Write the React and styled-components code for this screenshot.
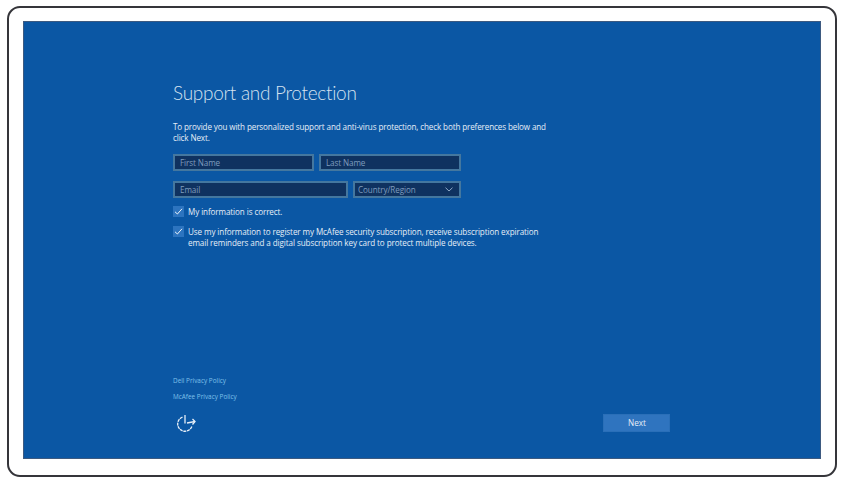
import React from "react";
import styled, { createGlobalStyle } from "styled-components";

const GlobalStyle = createGlobalStyle`
  html, body {
    margin: 0;
    padding: 0;
    background: #fff;
  }
  body {
    font-family: "Open Sans", "Noto Sans", "Liberation Sans", sans-serif;
  }
`;

const Page = styled.div`
  width: 843px;
  height: 481px;
  box-sizing: border-box;
  padding: 6px 6.5px 4.5px 7px;
`;

const Bezel = styled.div`
  width: 100%;
  height: 100%;
  box-sizing: border-box;
  border: 2px solid #35353a;
  border-radius: 13px;
  padding: 13px 14px 16px 14px;
`;

const Screen = styled.main`
  height: 100%;
  box-sizing: border-box;
  background: #0b57a4;
  border: 1px solid #3d5a80;
  padding: 59px 150px 26px 149px;
  display: flex;
  flex-direction: column;
  justify-content: space-between;
  color: #e6eef7;
`;

const Form = styled.section`
  display: flex;
  flex-direction: column;
`;

const Title = styled.h1`
  margin: 0 0 16px;
  font-family: "Lato", "Open Sans", sans-serif;
  font-size: 19px;
  letter-spacing: -0.3px;
  line-height: 24px;
  font-weight: 300;
  color: #d5e2f0;
`;

const Intro = styled.p`
  margin: 0 0 11px;
  width: 380px;
  font-size: 8.1px;
  letter-spacing: -0.13px;
  line-height: 11px;
  color: #e6eef7;
`;

const Fields = styled.div`
  display: flex;
  flex-direction: column;
  gap: 10px;
  margin-bottom: 8px;
`;

const FieldRow = styled.div`
  display: flex;
  gap: 5px;
`;

const Input = styled.input`
  width: ${(p) => p.$width}px;
  height: 17px;
  box-sizing: border-box;
  padding: 0 5px;
  background: #0f3260;
  border: 2px solid #44779f;
  border-radius: 0;
  outline: none;
  font-family: inherit;
  font-size: 8.1px;
  letter-spacing: -0.1px;
  color: #8ea8c6;
  &::placeholder {
    color: #7f9cbd;
    opacity: 1;
  }
`;

const Select = styled.div`
  width: 108px;
  height: 17px;
  box-sizing: border-box;
  padding: 0 6px 0 3px;
  display: flex;
  align-items: center;
  justify-content: space-between;
  background: #0f3260;
  border: 2px solid #44779f;
  font-size: 8.1px;
  letter-spacing: -0.1px;
  color: #7f9cbd;
`;

const CheckRow = styled.label`
  display: flex;
  align-items: flex-start;
  gap: 4px;
  margin-bottom: 9px;
  font-size: 8.1px;
  letter-spacing: -0.1px;
  line-height: 11px;
  color: #e6eef7;
`;

const CheckBox = styled.span`
  flex: none;
  width: 11px;
  height: 11px;
  background: #2d74bf;
  display: flex;
  align-items: center;
  justify-content: center;
`;

const CheckText = styled.span`
  width: 360px;
`;

const Footer = styled.footer`
  display: flex;
  justify-content: space-between;
  align-items: flex-end;
`;

const Links = styled.div`
  display: flex;
  flex-direction: column;
  align-items: flex-start;
`;

const PolicyLink = styled.a`
  font-size: 6.4px;
  line-height: 9px;
  margin-bottom: 7px;
  color: #7fc0ea;
`;

const AccessButton = styled.span`
  display: block;
  margin-top: 2px;
  width: 24px;
  height: 22px;
`;

const NextButton = styled.button`
  width: 67px;
  height: 18px;
  padding: 0 0 0 2px;
  border: 1px solid #2a6fb8;
  background: #2f74bf;
  font-family: inherit;
  font-size: 8.2px;
  color: #e6eef7;
`;

const Check = () => (
  <svg width="9" height="9" viewBox="0 0 9 9" fill="none">
    <path d="M1 4.8 L3.4 7 L8 1.8" stroke="#e8f1fa" strokeWidth="1" />
  </svg>
);

const Chevron = () => (
  <svg width="8" height="5" viewBox="0 0 8 5" fill="none">
    <path d="M0.5 0.7 L4 4 L7.5 0.7" stroke="#8ea8c6" strokeWidth="1" />
  </svg>
);

const AccessIcon = () => (
  <svg width="24" height="22" viewBox="0 0 24 22" fill="none" stroke="#e6eef7" strokeWidth="1.3">
    <path d="M9.5 7.1 A7.3 7.3 0 1 0 19 16" strokeDasharray="3 0.7" />
    <path d="M12 5 V13.5" />
    <path d="M14 13 L22 11.5" />
    <path d="M19.5 9 L22 11.5 L19.5 14.5" />
  </svg>
);

const App = () => {
  return (
    <>
      <GlobalStyle />
      <Page>
        <Bezel>
          <Screen>
            <Form>
              <Title>Support and Protection</Title>
              <Intro>
                To provide you with personalized support and anti-virus protection, check both preferences below and
                click Next.
              </Intro>
              <Fields>
                <FieldRow>
                  <Input $width={141} placeholder="First Name" />
                  <Input $width={142} placeholder="Last Name" />
                </FieldRow>
                <FieldRow>
                  <Input $width={175} placeholder="Email" />
                  <Select>
                    Country/Region
                    <Chevron />
                  </Select>
                </FieldRow>
              </Fields>
              <CheckRow>
                <CheckBox><Check /></CheckBox>
                <CheckText>My information is correct.</CheckText>
              </CheckRow>
              <CheckRow>
                <CheckBox><Check /></CheckBox>
                <CheckText>
                  Use my information to register my McAfee security subscription, receive subscription expiration
                  email reminders and a digital subscription key card to protect multiple devices.
                </CheckText>
              </CheckRow>
            </Form>
            <Footer>
              <Links>
                <PolicyLink>Dell Privacy Policy</PolicyLink>
                <PolicyLink>McAfee Privacy Policy</PolicyLink>
                <AccessButton><AccessIcon /></AccessButton>
              </Links>
              <NextButton>Next</NextButton>
            </Footer>
          </Screen>
        </Bezel>
      </Page>
    </>
  );
};

export default App;
